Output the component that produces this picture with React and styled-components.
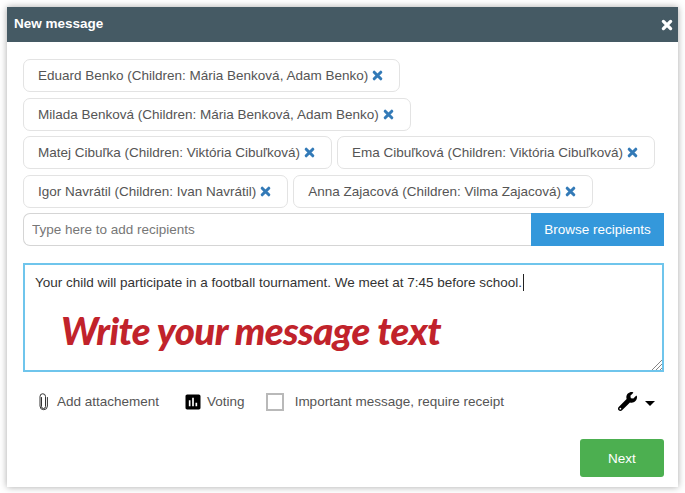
import React from 'react'
import styled, { createGlobalStyle } from 'styled-components'
import { FaWrench } from 'react-icons/fa'
import { MdPoll } from 'react-icons/md'

const GlobalStyle = createGlobalStyle`
  html, body {
    margin: 0;
    background: #fff;
    overflow: hidden;
  }
  * {
    box-sizing: border-box;
  }
`

const Modal = styled.div`
  width: 671px;
  height: 480px;
  margin: 7px;
  background: #fff;
  box-shadow: 0 0 7px rgba(0, 0, 0, 0.35);
  font-family: "Liberation Sans", Arial, sans-serif;
  font-size: 13.5px;
  color: #555;
  display: flex;
  flex-direction: column;
`

const Header = styled.div`
  height: 35px;
  flex: none;
  background: #455a64;
  color: #fff;
  display: flex;
  align-items: center;
  justify-content: space-between;
  padding: 0 5px 3px 7px;
  font-weight: 700;
`

const Cross = styled.svg`
  width: ${({ $size }) => $size}px;
  height: ${({ $size }) => $size}px;
  flex: none;
  stroke: currentColor;
  stroke-width: 3.3;
  stroke-linecap: round;
  fill: none;
`

const CloseCross = styled(Cross)`
  margin-top: 3px;
`

const RemoveCross = styled(Cross)`
  margin-left: 4px;
  color: #337ab7;
`

const Body = styled.div`
  flex: 1;
  padding: 17px 14px 10px 16px;
  display: flex;
  flex-direction: column;
`

const Chips = styled.div`
  display: flex;
  flex-wrap: wrap;
  gap: 5.5px 5px;
  margin-bottom: 5px;
`

const Chip = styled.div`
  height: 33px;
  border: 1px solid #e3e3e3;
  border-radius: 7px;
  padding: 0 16px 0 14px;
  display: flex;
  align-items: center;
  white-space: nowrap;
`

const InputRow = styled.div`
  display: flex;
  height: 33px;
`

const RecipientInput = styled.input`
  flex: 1;
  min-width: 0;
  border: 1px solid #d5d5d5;
  border-right: 0;
  border-radius: 7px 0 0 7px;
  padding: 0 8px;
  outline: none;
  font: inherit;
  color: #555;
  &::placeholder {
    color: #777;
    opacity: 1;
  }
`

const BrowseButton = styled.button`
  width: 133px;
  border: 0;
  background: #3498db;
  color: #fff;
  font: inherit;
  padding: 0;
`

const MessageBox = styled.div`
  position: relative;
  height: 109px;
  margin-top: 17px;
  border: 2px solid #6fc5ec;
  padding: 8px 10px;
  color: #333;
  line-height: 20px;
`

const Caret = styled.span`
  display: inline-block;
  width: 1px;
  height: 17px;
  margin-left: 1px;
  background: #222;
  vertical-align: -4px;
`

const Handwriting = styled.div`
  position: absolute;
  left: 36px;
  top: 43px;
  font-family: "Lato", "Noto Sans", sans-serif;
  font-weight: 900;
  font-style: italic;
  font-size: 38.5px;
  line-height: 44px;
  letter-spacing: -0.6px;
  color: #c1232b;
  white-space: nowrap;
`

const Grip = styled.svg`
  position: absolute;
  right: 0;
  bottom: 0;
  width: 11px;
  height: 11px;
`

const Tools = styled.div`
  height: 30px;
  margin-top: 15px;
  padding-left: 15px;
  padding-right: 9px;
  display: flex;
  align-items: center;
`

const ToolItem = styled.div`
  display: flex;
  align-items: center;
  gap: ${({ $gap }) => $gap}px;
  margin-right: ${({ $after }) => $after}px;
`

const Clip = styled.svg`
  width: 11px;
  height: 18px;
`

const Poll = styled(MdPoll)`
  width: 20px;
  height: 20px;
  color: #000;
`

const CheckBox = styled.span`
  width: 18px;
  height: 18px;
  border: 2px solid #b9b9b9;
  flex: none;
`

const Settings = styled.div`
  margin-left: auto;
  display: flex;
  align-items: center;
  gap: 8px;
  color: #000;
`

const Wrench = styled(FaWrench)`
  width: 19px;
  height: 19px;
`

const Arrow = styled.span`
  width: 0;
  height: 0;
  border-left: 5px solid transparent;
  border-right: 5px solid transparent;
  border-top: 5px solid #000;
  margin-top: 3px;
`

const Footer = styled.div`
  margin-top: auto;
  display: flex;
  justify-content: flex-end;
`

const NextButton = styled.button`
  width: 84px;
  height: 38px;
  border: 0;
  border-radius: 3px;
  background: #4caf50;
  color: #fff;
  font: inherit;
  padding: 0;
`

const recipients = [
  'Eduard Benko (Children: Mária Benková, Adam Benko)',
  'Milada Benková (Children: Mária Benková, Adam Benko)',
  'Matej Cibuľka (Children: Viktória Cibuľková)',
  'Ema Cibuľková (Children: Viktória Cibuľková)',
  'Igor Navrátil (Children: Ivan Navrátil)',
  'Anna Zajacová (Children: Vilma Zajacová)',
]

const CrossIcon = ({ as: Base = Cross, size }) => (
  <Base $size={size} viewBox="0 0 12 12">
    <path d="M2.4 2.4l7.2 7.2M9.6 2.4l-7.2 7.2" />
  </Base>
)

const App = () => {
  return (
    <>
      <GlobalStyle />
      <Modal>
        <Header>
          <span>New message</span>
          <CrossIcon as={CloseCross} size={12} />
        </Header>
        <Body>
          <Chips>
            {recipients.map((name) => (
              <Chip key={name}>
                {name}
                <CrossIcon as={RemoveCross} size={11} />
              </Chip>
            ))}
          </Chips>
          <InputRow>
            <RecipientInput placeholder="Type here to add recipients" />
            <BrowseButton>Browse recipients</BrowseButton>
          </InputRow>
          <MessageBox>
            Your child will participate in a football tournament. We meet at 7:45 before school.
            <Caret />
            <Handwriting>Write your message text</Handwriting>
            <Grip viewBox="0 0 11 11">
              <path d="M1 11L11 1M5 11l6-6M9 11l2-2" stroke="#666" strokeWidth="0.8" fill="none" />
            </Grip>
          </MessageBox>
          <Tools>
            <ToolItem $gap={8} $after={24}>
              <Clip viewBox="0 0 11 18">
                <path
                  d="M3.5 4.5v9a2 2 0 0 0 4 0V3.5a2.6 2.6 0 0 0-5.5 0V13a3.6 3.6 0 0 0 7.4 0V4.5"
                  stroke="#333"
                  strokeWidth="1"
                  fill="none"
                  strokeLinecap="round"
                />
              </Clip>
              <span>Add attachement</span>
            </ToolItem>
            <ToolItem $gap={4} $after={21}>
              <Poll />
              <span>Voting</span>
            </ToolItem>
            <ToolItem $gap={11} $after={0}>
              <CheckBox />
              <span>Important message, require receipt</span>
            </ToolItem>
            <Settings>
              <Wrench />
              <Arrow />
            </Settings>
          </Tools>
          <Footer>
            <NextButton>Next</NextButton>
          </Footer>
        </Body>
      </Modal>
    </>
  )
}

export default App
